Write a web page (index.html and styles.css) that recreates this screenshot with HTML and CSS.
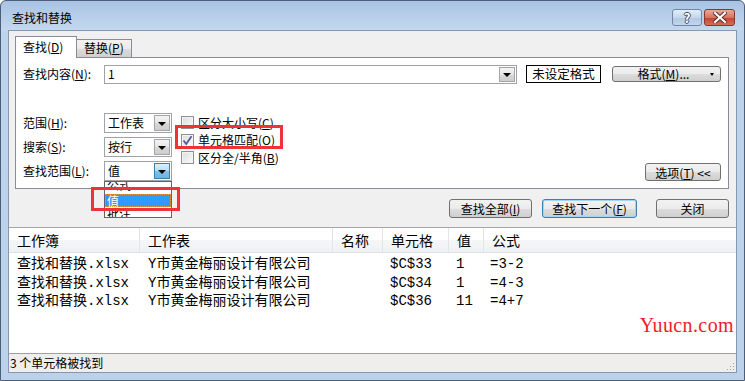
FILE: index.html
```html
<!DOCTYPE html>
<html lang="zh-CN">
<head>
    <meta charset="UTF-8">
    <title>查找和替换</title>
    <link rel="stylesheet" href="styles.css">
</head>
<body>
<div class="window">
    <!-- Title bar -->
    <div class="titlebar">
        <span class="title">查找和替换</span>
        <div class="caption-buttons">
            <button class="cap help">?</button>
            <button class="cap close">
                <svg width="14" height="11" viewBox="0 0 14 11">
                    <path d="M2 1 L12 10 M12 1 L2 10" stroke="#5a2a26" stroke-width="4" stroke-linecap="square"/>
                    <path d="M2 1 L12 10 M12 1 L2 10" stroke="#fff" stroke-width="2.2" stroke-linecap="square"/>
                </svg>
            </button>
        </div>
    </div>

    <div class="client">
        <!-- Tabs -->
        <div class="tabs">
            <div class="tab active">查找(<u>D</u>)</div>
            <div class="tab">替换(<u>P</u>)</div>
        </div>

        <div class="panel">
            <div class="find-row">
                <span class="label">查找内容(<u>N</u>):</span>
                <div class="combo find-input">
                    <span class="combo-text">1</span>
                    <span class="combo-btn"><i class="tri"></i></span>
                </div>
                <div class="format-preview">未设定格式</div>
                <button class="btn format-btn">格式(<u>M</u>)...<i class="mini-tri"></i></button>
            </div>

            <div class="options">
                <div class="fields">
                    <div class="field">
                        <span class="label">范围(<u>H</u>):</span>
                        <div class="combo"><span class="combo-text">工作表</span><span class="combo-btn"><i class="tri"></i></span></div>
                    </div>
                    <div class="field">
                        <span class="label">搜索(<u>S</u>):</span>
                        <div class="combo"><span class="combo-text">按行</span><span class="combo-btn"><i class="tri"></i></span></div>
                    </div>
                    <div class="field">
                        <span class="label">查找范围(<u>L</u>):</span>
                        <div class="combo open"><span class="combo-text">值</span><span class="combo-btn"><i class="tri"></i></span></div>
                    </div>
                </div>

                <div class="checks">
                    <div class="check"><span class="box"></span>区分大小写(<u>C</u>)</div>
                    <div class="check"><span class="box checked">
                        <svg width="11" height="11" viewBox="0 0 11 11"><path d="M1.5 5.5 L4.2 9 L9.5 1.2" fill="none" stroke="#4b5e9a" stroke-width="1.8"/></svg>
                    </span>单元格匹配(<u>O</u>)</div>
                    <div class="check"><span class="box"></span>区分全/半角(<u>B</u>)</div>
                </div>

                <button class="btn options-btn">选项(<u>T</u>) &lt;&lt;</button>
            </div>

            <!-- Open list of the third combo -->
            <div class="dropdown">
                <div class="dropdown-inner">
                    <div class="dd-item">公式</div>
                    <div class="dd-item selected">值</div>
                    <div class="dd-item">批注</div>
                </div>
            </div>

            <!-- Annotation boxes -->
            <div class="mark mark-check"></div>
            <div class="mark mark-list"></div>
        </div>

        <div class="actions">
            <button class="btn">查找全部(<u>I</u>)</button>
            <button class="btn focused">查找下一个(<u>F</u>)</button>
            <button class="btn close-btn">关闭</button>
        </div>

        <!-- Results -->
        <div class="results">
            <div class="results-head">
                <span>工作簿</span>
                <span>工作表</span>
                <span>名称</span>
                <span>单元格</span>
                <span>值</span>
                <span>公式</span>
            </div>
            <div class="results-body">
                <div class="result-row">
                    <span>查找和替换.xlsx</span><span>Y市黄金梅丽设计有限公司</span><span></span><span>$C$33</span><span>1</span><span>=3-2</span>
                </div>
                <div class="result-row">
                    <span>查找和替换.xlsx</span><span>Y市黄金梅丽设计有限公司</span><span></span><span>$C$34</span><span>1</span><span>=4-3</span>
                </div>
                <div class="result-row">
                    <span>查找和替换.xlsx</span><span>Y市黄金梅丽设计有限公司</span><span></span><span>$C$36</span><span>11</span><span>=4+7</span>
                </div>
            </div>
            <span class="watermark">Yuucn.com</span>
        </div>

        <div class="statusbar">
            <span>3 个单元格被找到</span>
            <span class="grip"></span>
        </div>
    </div>
</div>
</body>
</html>
```

FILE: styles.css
```css
/* General */
* {
    box-sizing: border-box;
}

body {
    margin: 0;
    width: 745px;
    height: 381px;
    overflow: hidden;
    background: #ffffff;
    font-family: "Noto Sans CJK SC", sans-serif;
    font-size: 12px;
    color: #000;
}

u {
    text-decoration: underline;
}

button {
    font-family: inherit;
    font-size: 12px;
    color: #000;
    margin: 0;
    padding: 0;
}

/* Window frame */
.window {
    width: 745px;
    height: 381px;
    border: 1px solid #4d5f78;
    border-radius: 6px 6px 0 0;
    padding: 0 7px 7px;
    background: linear-gradient(#a8c3e4, #c4d8ee 29px, #bed4ec 30px, #bcd2ea);
    display: flex;
    flex-direction: column;
}

.titlebar {
    height: 29px;
    display: flex;
    align-items: flex-start;
    justify-content: space-between;
}

.title {
    padding: 9px 0 0 4px;
    line-height: 16px;
    font-size: 12px;
}

.caption-buttons {
    display: flex;
    gap: 2px;
    margin: 8px 2px 0 0;
}

.cap {
    height: 17px;
    border-radius: 3px;
    display: flex;
    align-items: center;
    justify-content: center;
}

.help {
    width: 30px;
    border: 1px solid #6f86a6;
    background: linear-gradient(#e3ecf7, #c5d7ec 50%, #b0c7e2 51%, #c3d6ec);
    color: #fff;
    font-weight: bold;
    font-size: 13px;
    line-height: 13px;
    text-shadow: 1px 0 #3d4f68, -1px 0 #3d4f68, 0 1px #3d4f68, 0 -1px #3d4f68;
}

.close {
    width: 31px;
    border: 1px solid #83392f;
    background: linear-gradient(#eaa89b, #d8745f 50%, #c4422f 51%, #d0705a);
}

/* Client area */
.client {
    flex: 1;
    background: #f0f0f0;
    border: 1px solid #8598b0;
    display: flex;
    flex-direction: column;
}

/* Tabs */
.tabs {
    display: flex;
    align-items: flex-end;
    height: 21px;
    margin: 5px 0 0 6px;
}

.tab {
    height: 18px;
    padding: 0 7px;
    border: 1px solid #898c95;
    border-bottom: none;
    background: linear-gradient(#f2f2f2, #ebebeb 50%, #dddddd 51%, #cfcfcf);
    line-height: 16px;
}

.tab.active {
    height: 22px;
    margin-bottom: -1px;
    margin-right: -1px;
    padding: 0 7px;
    background: #ffffff;
    line-height: 20px;
    position: relative;
    z-index: 2;
    width: 62px;
}

.panel {
    position: relative;
    width: 714px;
    height: 132px;
    margin-left: 6px;
    padding: 7px 7px 7px 7px;
    border: 1px solid #898c95;
    background: #ffffff;
}

.label {
    width: 81px;
    flex-shrink: 0;
    line-height: 16px;
}

.find-row {
    display: flex;
    align-items: center;
    height: 18px;
}

/* Combo boxes */
.combo {
    position: relative;
    width: 68px;
    height: 20px;
    border: 1px solid #9fa2a8;
    background: #ffffff;
    display: flex;
    align-items: center;
}

.combo-text {
    flex: 1;
    padding-left: 3px;
    line-height: 16px;
}

.combo-btn {
    width: 16px;
    height: 16px;
    margin-right: 1px;
    border: 1px solid #a5a5a5;
    background: linear-gradient(#f4f4f4, #e6e6e6 50%, #d8d8d8 51%, #cdcdcd);
    display: flex;
    align-items: center;
    justify-content: center;
}

.tri {
    width: 0;
    height: 0;
    border-left: 4px solid transparent;
    border-right: 4px solid transparent;
    border-top: 4px solid #000;
    margin-top: 1px;
}

.combo.open .combo-btn {
    border-color: #3c7fb1;
    background: linear-gradient(#dcf0fb, #b5dcf3 50%, #7fc2ea 51%, #6cb3e0);
}

.find-input {
    width: 413px;
    height: 19px;
}

.find-input .combo-btn {
    height: 15px;
}

.format-preview {
    width: 75px;
    height: 18px;
    margin-left: 9px;
    border: 1px solid #000;
    text-align: center;
    line-height: 16px;
    font-size: 12.5px;
}

/* Buttons */
.btn {
    height: 19px;
    border: 1px solid #707070;
    border-radius: 3px;
    background: linear-gradient(#f2f2f2, #ebebeb 50%, #dddddd 51%, #cfcfcf);
    line-height: 16px;
    text-align: center;
}

.btn.focused {
    border-color: #3c7fb1;
    box-shadow: inset 0 0 0 1px #9fd6f5;
}

.format-btn {
    position: relative;
    width: 109px;
    height: 16px;
    margin-left: 11px;
    line-height: 14px;
    padding-right: 6px;
}

.mini-tri {
    position: absolute;
    right: 6px;
    top: 6px;
    width: 0;
    height: 0;
    border-left: 2px solid transparent;
    border-right: 2px solid transparent;
    border-top: 3px solid #000;
}

/* Options section */
.options {
    display: flex;
    align-items: flex-end;
    margin-top: 30px;
}

.fields {
    display: flex;
    flex-direction: column;
    gap: 4px;
}

.field {
    display: flex;
    align-items: center;
}

.checks {
    align-self: flex-start;
    margin-left: 9px;
    padding-top: 1px;
}

.check {
    height: 17.5px;
    display: flex;
    align-items: center;
    line-height: 16px;
}

.box {
    width: 13px;
    height: 13px;
    margin-right: 4px;
    border: 1px solid #8e8f8f;
    background: linear-gradient(135deg, #dcdcdc, #fbfbfb);
    box-shadow: inset 0 0 0 1px #f4f4f4;
    display: flex;
    align-items: center;
    justify-content: center;
}

.options-btn {
    width: 76px;
    height: 18px;
    margin-left: auto;
    line-height: 15px;
}

/* Dropdown list */
.dropdown {
    position: absolute;
    left: 88px;
    top: 123px;
    width: 68px;
    height: 37px;
    border: 1px solid #646464;
    background: #ffffff;
    overflow: hidden;
    z-index: 3;
}

.dropdown-inner {
    margin-top: -4px;
}

.dd-item {
    height: 13px;
    padding-left: 2px;
    line-height: 13px;
}

.dd-item.selected {
    margin-top: 3px;
    background: #3399ff;
    color: #fff;
    outline: 1px dotted #e3953e;
    outline-offset: -1px;
}

/* Red annotation frames */
.mark {
    position: absolute;
    border: 3px solid #ee3338;
    z-index: 4;
}

.mark-check {
    left: 159px;
    top: 67px;
    width: 108px;
    height: 24px;
}

.mark-list {
    left: 75px;
    top: 129px;
    width: 89px;
    height: 24px;
}

/* Action buttons */
.actions {
    display: flex;
    margin: 10px 7px 0 0;
    justify-content: flex-end;
}

.actions .btn {
    width: 83px;
}

.actions .btn.focused {
    width: 95px;
    margin-left: 10px;
}

.actions .close-btn {
    width: 73px;
    margin-left: 19px;
}

/* Results list */
.results {
    position: relative;
    height: 126px;
    margin-top: 9px;
    border-top: 1px solid #a6a6a6;
    background: #ffffff;
    font-size: 14px;
}

.results-head,
.result-row {
    display: grid;
    grid-template-columns: 131px 193px 50px 66px 35px 1fr;
}

.results-head {
    height: 25px;
    border-bottom: 1px solid #e0e0e0;
    background: linear-gradient(#ffffff, #ffffff 50%, #f5f6f7 51%, #eff1f3);
}

.results-head span {
    padding-left: 8px;
    line-height: 24px;
    border-right: 1px solid #e3e4e6;
}

.results-head span:last-child {
    border-right: none;
}

.results-body {
    padding-top: 2px;
    font-family: "Liberation Mono", "Noto Sans CJK SC", monospace;
}

.result-row {
    height: 18.5px;
    line-height: 18px;
}

.result-row span {
    padding-left: 8px;
    white-space: nowrap;
}

.result-row span:nth-child(4),
.result-row span:nth-child(5) {
    padding-left: 7px;
}

.result-row span:nth-child(6) {
    padding-left: 6px;
}

.watermark {
    position: absolute;
    right: 2px;
    top: 86px;
    font-family: "Liberation Serif", serif;
    font-size: 20px;
    letter-spacing: 0.4px;
    color: #f11a2b;
}

/* Status bar */
.statusbar {
    position: relative;
    height: 19px;
    border-top: 1px solid #a0a0a0;
    background: #f0eeec;
    padding-left: 1px;
    line-height: 18px;
}

.grip {
    position: absolute;
    right: 2px;
    bottom: 2px;
    width: 8px;
    height: 8px;
    background:
        radial-gradient(circle, #a0a0a0 0.8px, transparent 1px) 0 0 / 3px 3px;
    clip-path: polygon(100% 0, 100% 100%, 0 100%);
}
```
